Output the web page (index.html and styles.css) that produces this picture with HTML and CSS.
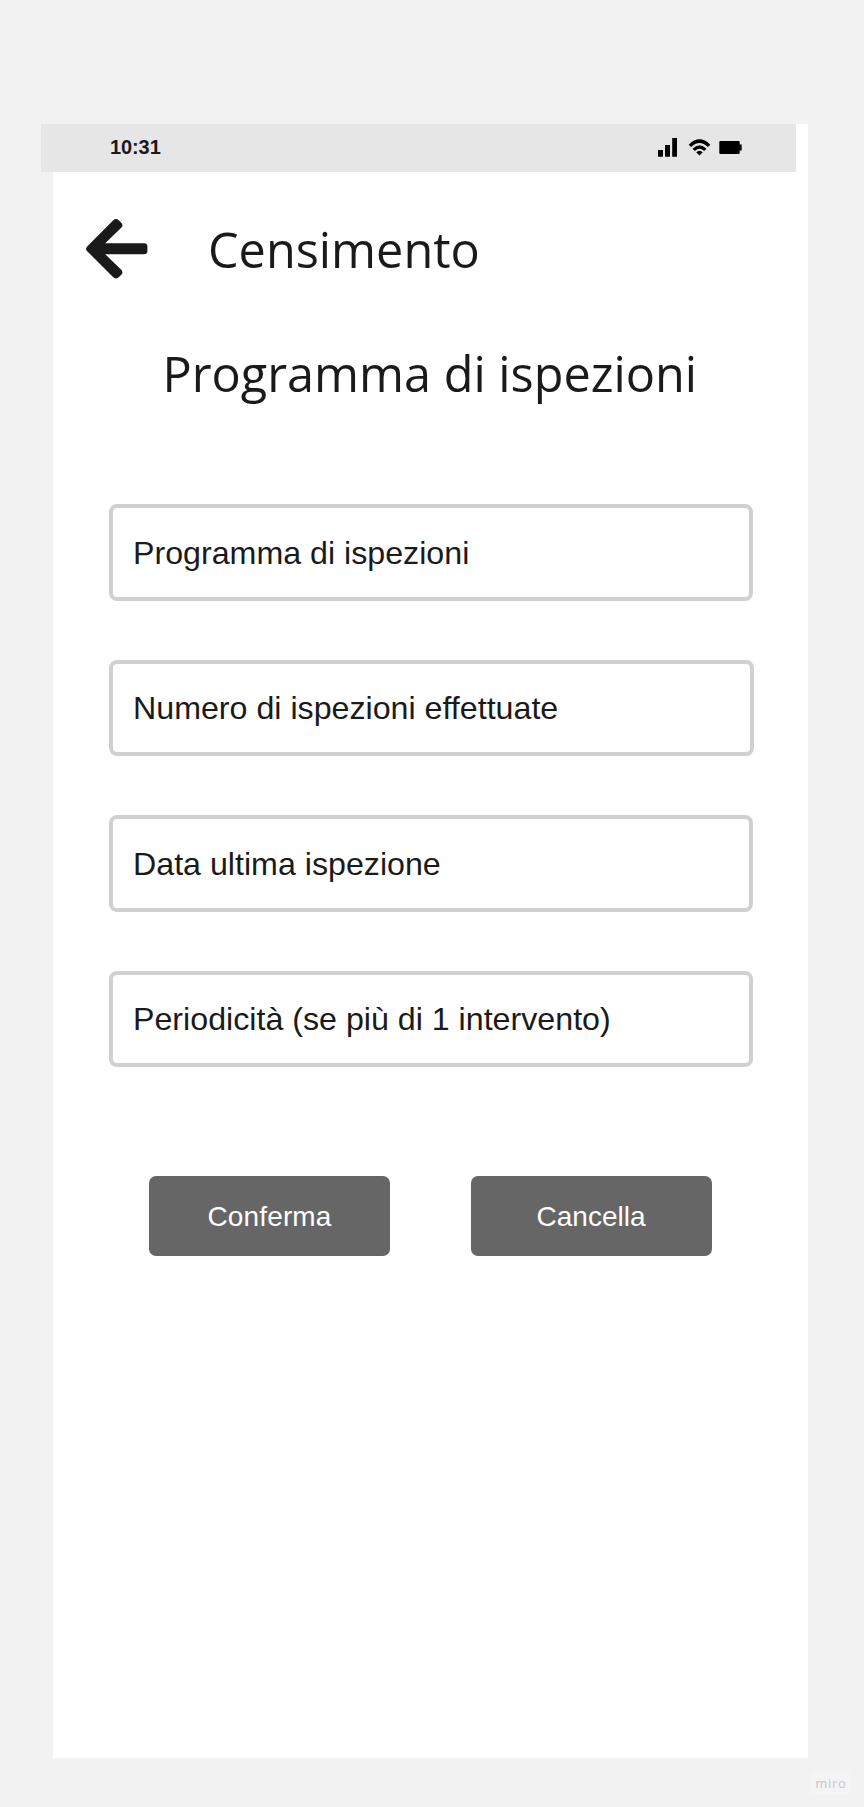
FILE: index.html
```html
<!DOCTYPE html>
<html lang="it">
<head>
<meta charset="utf-8">
<title>Programma di ispezioni</title>
<link rel="stylesheet" href="styles.css">
</head>
<body>
<main class="phone">
  <div class="status">
    <span class="time">10:31</span>
    <svg class="status-icons" viewBox="0 0 86 22" width="86" height="22">
      <path d="M1 13h5v6.7H1zM8 8h5v11.7H8zM15.2 1h4.8v18.7h-4.8z"/>
      <path d="M31.7 7.8Q42.5 -3.1 53.3 7.8L50.9 10Q42.5 1.8 34.1 10z"/>
      <path d="M35.5 11.7Q42.5 4.7 49.5 11.7L47.1 14Q42.5 9.5 37.9 14z"/>
      <path d="M39.2 15.3Q42.5 12.1 45.8 15.3L42.5 18.5z"/>
      <path d="M63.3 4h18.4a1 1 0 0 1 1 1v2.5h2v6h-2V16a1 1 0 0 1-1 1H63.3a1 1 0 0 1-1-1V5a1 1 0 0 1 1-1z"/>
    </svg>
  </div>
  <header class="header">
    <svg class="back" viewBox="0 0 62 62" width="62" height="62">
      <path d="M1.2 28.6L27 2.5Q30 -.4 33 2.5L35.3 4.8Q37.8 7.3 35 10L19.2 25.2H58Q61.4 25.2 61.4 28.5V33Q61.4 36.3 58 36.3H19.2L35 51.6Q37.8 54.3 35.3 56.8L33 59.1Q30 62 27 59.1L1.2 33.2Q-1 30.9 1.2 28.6z"/>
    </svg>
    <h1 class="title">Censimento</h1>
  </header>
  <h2 class="subtitle">Programma di ispezioni</h2>
  <form class="fields">
    <div class="field">Programma di ispezioni</div>
    <div class="field field-wide">Numero di ispezioni effettuate</div>
    <div class="field">Data ultima ispezione</div>
    <div class="field">Periodicità (se più di 1 intervento)</div>
  </form>
  <div class="actions">
    <button class="button confirm">Conferma</button>
    <button class="button">Cancella</button>
  </div>
</main>
<footer class="footer"><span class="brand">miro</span></footer>
</body>
</html>
```

FILE: styles.css
```css
* { box-sizing: border-box; }
body {
  margin: 0;
  padding-top: 124px;
  height: 1807px;
  overflow: hidden;
  background: #f2f2f2;
  color: #1a1a1a;
  font-family: "Liberation Sans", Arial, sans-serif;
}
.phone {
  width: 755px;
  height: 1634px;
  margin-left: 53px;
  background: #fff;
}
.status {
  display: flex;
  justify-content: space-between;
  width: 755px;
  height: 48px;
  margin-left: -12px;
  padding: 13px 53px 0 69px;
  background: #e6e6e6;
}
.time { font-size: 20px; font-weight: 700; line-height: 20px; letter-spacing: -0.1px; }
.status-icons { fill: #000; }
.header { display: flex; align-items: center; height: 62px; margin: 46px 0 0 33px; }
.back { flex: none; fill: #1a1a1a; }
.title, .subtitle {
  margin: 0;
  font-family: "Open Sans", sans-serif;
  font-size: 48.6px;
  font-weight: 400;
  line-height: 66px;
  white-space: nowrap;
}
.title { margin-left: 60px; padding-bottom: 1px; }
.subtitle { margin: 60px 0 0 109.5px; }
.fields { display: flex; flex-direction: column; gap: 59px; margin: 98px 0 0 56px; }
.field {
  width: 643.5px;
  height: 96.5px;
  padding: 26.5px 0 0 20px;
  border: 4px solid #d0d0d0;
  border-radius: 8px;
  font-size: 32.2px;
  line-height: 36px;
  white-space: nowrap;
}
.field-wide { width: 645px; }
.actions { display: flex; gap: 80.5px; margin: 109px 0 0 96px; }
.button {
  width: 241px;
  height: 80px;
  padding: 2px 0 0;
  border: 0;
  border-radius: 7px;
  background: #666;
  color: #fff;
  font-family: inherit;
  font-size: 28px;
}
.confirm { letter-spacing: 0.15px; }
.footer { display: flex; justify-content: flex-end; padding: 15px 13px 0 0; }
.brand {
  width: 40px;
  height: 21px;
  background: #f4f4f4;
  color: #c5c4d0;
  font: 500 13px/20px "Open Sans", sans-serif;
  letter-spacing: 0.7px;
  text-align: center;
}
```
